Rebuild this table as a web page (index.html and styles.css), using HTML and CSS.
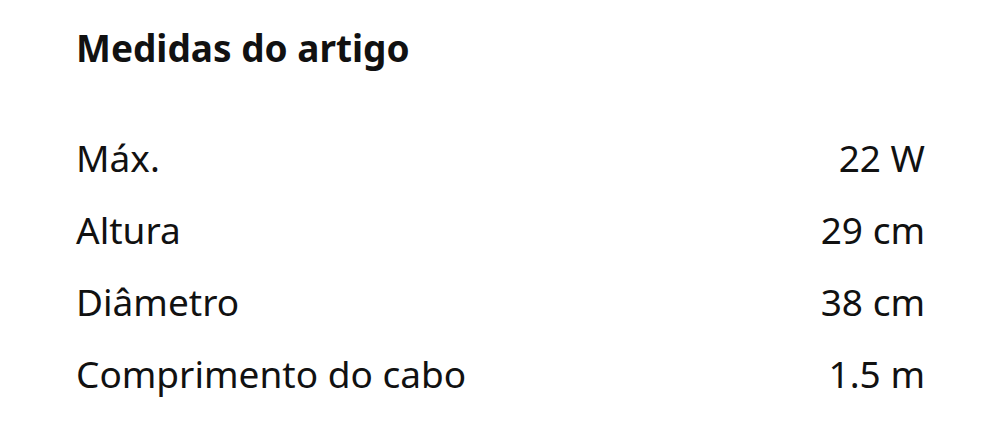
FILE: index.html
```html
<!DOCTYPE html>
<html lang="pt">
<head>
<meta charset="utf-8">
<link rel="stylesheet" href="styles.css">
</head>
<body>
<section class="panel">
  <h2 class="title">Medidas do artigo</h2>
  <dl class="specs">
    <div class="row"><dt>Máx.</dt><dd>22 W</dd></div>
    <div class="row"><dt>Altura</dt><dd>29 cm</dd></div>
    <div class="row"><dt>Diâmetro</dt><dd>38 cm</dd></div>
    <div class="row"><dt>Comprimento do cabo</dt><dd>1.5 m</dd></div>
  </dl>
</section>
</body>
</html>
```
FILE: styles.css
```css
html, body {
  margin: 0;
  padding: 0;
  background: #fff;
}
body {
  font-family: "Noto Sans", sans-serif;
  color: #111;
}
.panel {
  padding: 22px 75px 0 76px;
}
.title {
  margin: 0;
  font-size: 37px;
  font-weight: 700;
  line-height: 52px;
}
.specs {
  margin: 48px 0 0;
  display: flex;
  flex-direction: column;
}
.row {
  display: flex;
  justify-content: space-between;
  align-items: baseline;
  height: 72px;
  font-size: 37px;
  line-height: 72px;
}
.row dt, .row dd {
  margin: 0;
}
```
